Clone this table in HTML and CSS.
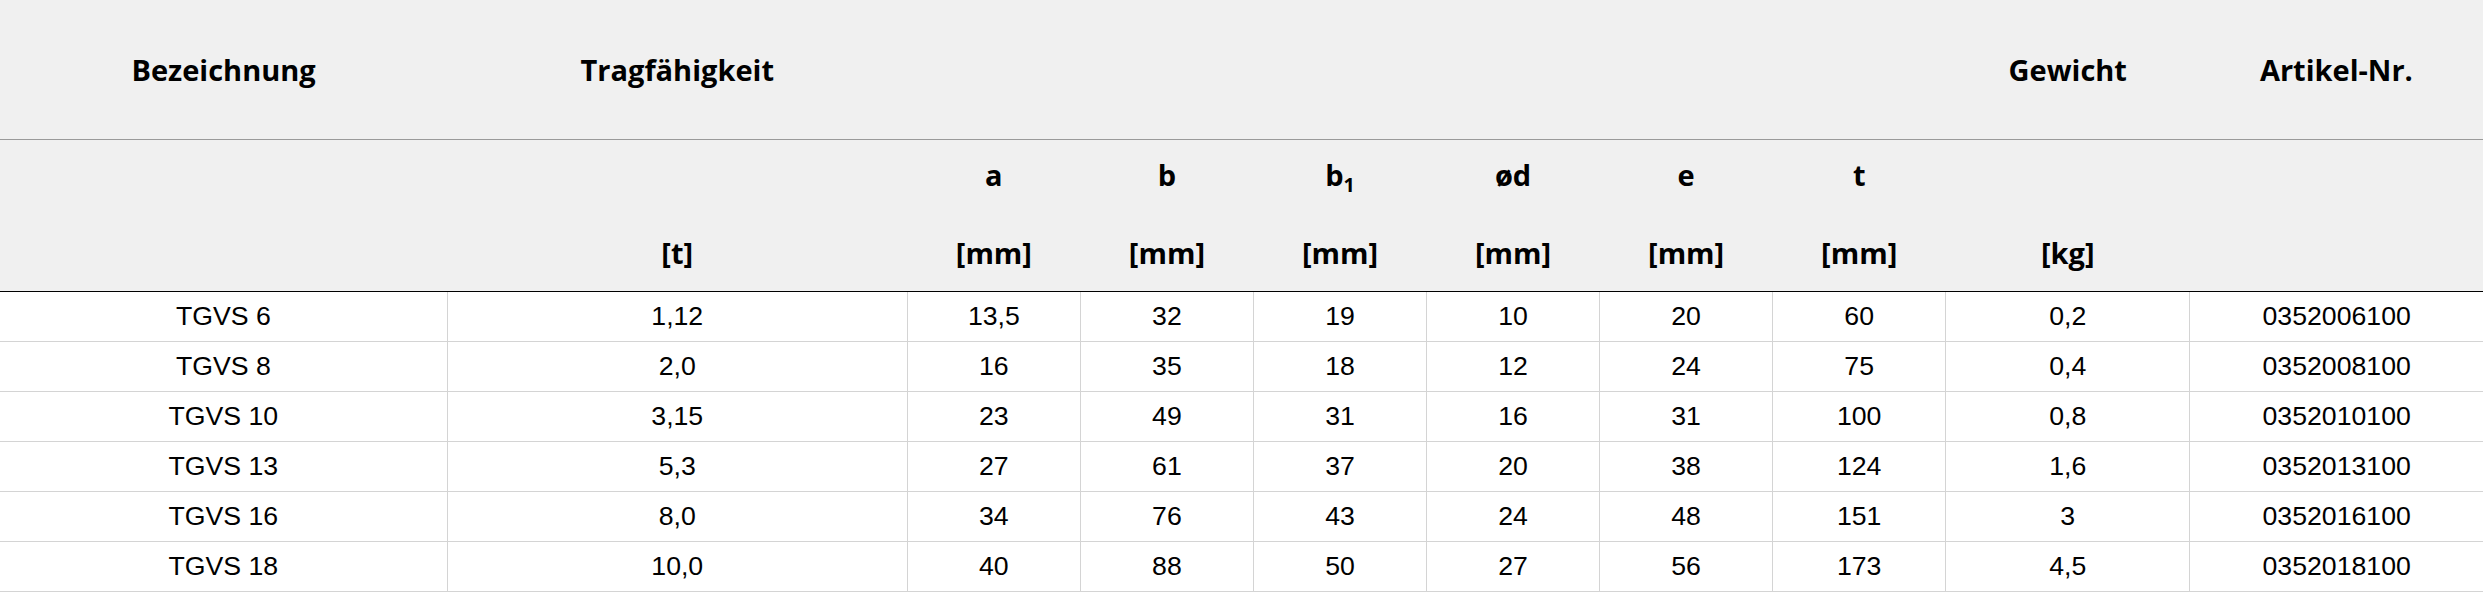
FILE: index.html
```html
<!DOCTYPE html>
<html lang="de">
<head>
<meta charset="utf-8">
<title>TGVS Tabelle</title>
<link rel="stylesheet" href="styles.css">
</head>
<body>
<table class="spec">
  <colgroup>
    <col class="c-name">
    <col class="c-load">
    <col class="c-dim">
    <col class="c-dim">
    <col class="c-dim">
    <col class="c-dim">
    <col class="c-dim">
    <col class="c-dim">
    <col class="c-weight">
    <col class="c-art">
  </colgroup>
  <thead>
    <tr class="head-main">
      <th>Bezeichnung</th>
      <th>Tragfähigkeit</th>
      <th></th>
      <th></th>
      <th></th>
      <th></th>
      <th></th>
      <th></th>
      <th>Gewicht</th>
      <th>Artikel-Nr.</th>
    </tr>
    <tr class="head-units">
      <th></th>
      <th><div class="sym"></div><div class="unit">[t]</div></th>
      <th><div class="sym">a</div><div class="unit">[mm]</div></th>
      <th><div class="sym">b</div><div class="unit">[mm]</div></th>
      <th><div class="sym">b<sub>1</sub></div><div class="unit">[mm]</div></th>
      <th><div class="sym">ød</div><div class="unit">[mm]</div></th>
      <th><div class="sym">e</div><div class="unit">[mm]</div></th>
      <th><div class="sym">t</div><div class="unit">[mm]</div></th>
      <th><div class="sym"></div><div class="unit">[kg]</div></th>
      <th></th>
    </tr>
  </thead>
  <tbody>
    <tr><td>TGVS 6</td><td>1,12</td><td>13,5</td><td>32</td><td>19</td><td>10</td><td>20</td><td>60</td><td>0,2</td><td>0352006100</td></tr>
    <tr><td>TGVS 8</td><td>2,0</td><td>16</td><td>35</td><td>18</td><td>12</td><td>24</td><td>75</td><td>0,4</td><td>0352008100</td></tr>
    <tr><td>TGVS 10</td><td>3,15</td><td>23</td><td>49</td><td>31</td><td>16</td><td>31</td><td>100</td><td>0,8</td><td>0352010100</td></tr>
    <tr><td>TGVS 13</td><td>5,3</td><td>27</td><td>61</td><td>37</td><td>20</td><td>38</td><td>124</td><td>1,6</td><td>0352013100</td></tr>
    <tr><td>TGVS 16</td><td>8,0</td><td>34</td><td>76</td><td>43</td><td>24</td><td>48</td><td>151</td><td>3</td><td>0352016100</td></tr>
    <tr><td>TGVS 18</td><td>10,0</td><td>40</td><td>88</td><td>50</td><td>27</td><td>56</td><td>173</td><td>4,5</td><td>0352018100</td></tr>
  </tbody>
</table>
</body>
</html>
```
FILE: styles.css
```css
html, body {
  margin: 0;
  padding: 0;
  background: #ffffff;
}

.spec {
  width: 2483px;
  border-collapse: collapse;
  table-layout: fixed;
  color: #000;
}

.c-name { width: 447px; }
.c-load { width: 460px; }
.c-dim { width: 173px; }
.c-weight { width: 244px; }
.c-art { width: 293px; }

.spec thead th {
  background: #f0f0f0;
  font-family: "Open Sans", "Liberation Sans", sans-serif;
  font-weight: 700;
  font-size: 29px;
  text-align: center;
  padding: 0;
}

.head-main th {
  height: 139px;
  padding-top: 3px;
  box-sizing: border-box;
  vertical-align: middle;
  border-bottom: 1px solid #9a9a9a;
  line-height: 1.36;
}

.head-units th {
  height: 152px;
  box-sizing: border-box;
  vertical-align: top;
  border-bottom: 1px solid #000;
}

.sym {
  height: 70px;
  line-height: 70px;
}

.sym sub {
  font-size: 0.68em;
  vertical-align: -0.32em;
  line-height: 0;
}

.unit {
  margin-top: 8px;
  height: 70px;
  line-height: 70px;
}

.spec tbody td {
  height: 50px;
  box-sizing: border-box;
  padding: 0;
  text-align: center;
  vertical-align: middle;
  font-family: "Liberation Sans", Arial, sans-serif;
  font-size: 26.67px;
  border-bottom: 1px solid #d4d4d4;
  border-left: 1px solid #d4d4d4;
}

.spec tbody td:first-child {
  border-left: none;
}
```
